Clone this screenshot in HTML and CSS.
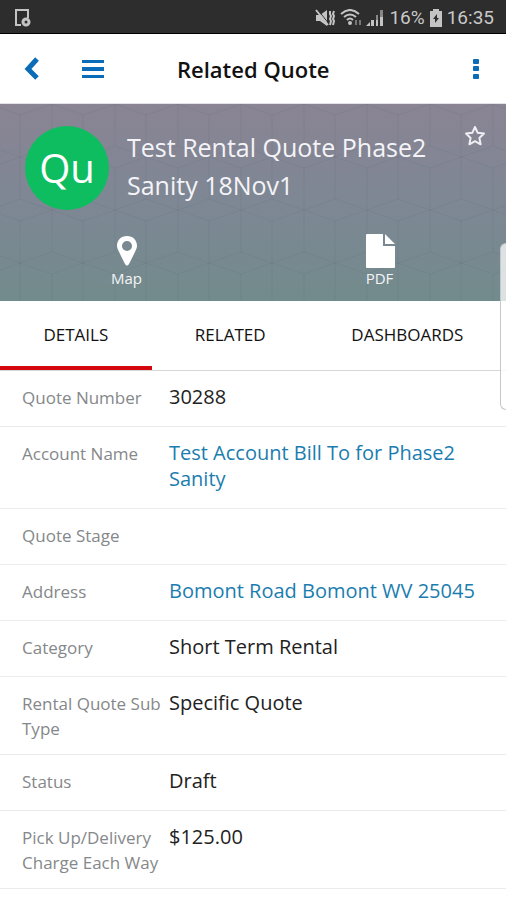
FILE: index.html
```html
<!DOCTYPE html>
<html lang="en">
<head>
<meta charset="utf-8">
<meta name="viewport" content="width=device-width, initial-scale=1">
<title>Related Quote</title>
<link rel="stylesheet" href="styles.css">
</head>
<body>
<div class="status-bar">
  <svg class="status-note" width="18" height="20" viewBox="0 0 18 20" fill="none" stroke="#c4c4c4" stroke-width="2"><path d="M7 17H2V2h12v8"/><circle cx="12" cy="14" r="3" stroke-width="3"/></svg>
  <div class="status-right">
    <svg width="20" height="18" viewBox="0 0 20 18"><path fill="#c4c4c4" d="M1 6h4l7-5v16l-7-5H1z"/><path d="M3 1l11 14" stroke="#2d2d2d" stroke-width="1"/><path d="M1 1l12 15M15 2v3l1 2-1 3 1 2-1 4M19 2l-1 3 1 2-1 3 1 2-1 4" fill="none" stroke="#c4c4c4" stroke-width="2"/></svg>
    <svg width="21" height="18" viewBox="0 0 21 18" fill="none" stroke="#c4c4c4" stroke-width="2"><path d="M1 5q9-8 18 0M4 8q6-5 12 0M7 11q3-3 6 0"/><circle cx="10" cy="14" r="1" fill="#c4c4c4"/><path d="M16 11v5M20 11v5" stroke="#777"/></svg>
    <svg width="18" height="18" viewBox="0 0 18 18" fill="#c4c4c4"><path d="M0 17l4-4v4zM5 11h3v6H5zM10 6h2v11h-2zM14 1h3v16h-3z"/><path fill="#888" d="M10 6h2v5h-2zM14 1h3v7h-3z"/></svg>
    <span class="status-percent">16%</span>
    <svg width="12" height="18" viewBox="0 0 12 18"><path fill="#c4c4c4" d="M3 0h6v2h3v16H0V2h3z"/><path fill="#2d2d2d" d="M7 5L3 10h2v4l4-5H7z"/></svg>
    <span class="status-time">16:35</span>
  </div>
</div>
<header class="nav-bar">
  <button class="icon-button" aria-label="Back"><svg width="16" height="24" viewBox="0 0 16 24" fill="none" stroke="#0b6cb8" stroke-width="5"><path d="M13 2L4 12l9 9"/></svg></button>
  <button class="icon-button menu-button" aria-label="Menu"><svg width="22" height="20" viewBox="0 0 22 20" fill="#0b6cb8"><path d="M0 1h22v3H0zM0 8h22v4H0zM0 16h22v3H0z"/></svg></button>
  <h1 class="page-title">Related Quote</h1>
  <button class="icon-button more-button" aria-label="More"><svg width="6" height="20" viewBox="0 0 6 20" fill="#0b6cb8"><rect width="6" height="5" rx="1"/><rect y="7" width="6" height="5" rx="1"/><rect y="15" width="6" height="5" rx="1"/></svg></button>
</header>
<main>
  <section class="hero">
    <svg class="hero-pattern" aria-hidden="true"><defs><pattern id="cubes" x="20" y="53" width="63" height="106" patternUnits="userSpaceOnUse"><path d="M0 0L32 11L63 0L32-11ZM0 106L32 95L63 106L32 117ZM-32 53L0 42L32 53L0 64ZM32 53L63 42L95 53L63 64ZM0 0V42M63 0V42M32 11V95M0 64V106M63 64V106" fill="none" stroke="#404b68" stroke-opacity=".1"/></pattern></defs><rect width="100%" height="100%" fill="url(#cubes)"/></svg>
    <div class="record">
      <div class="avatar">Qu</div>
      <h2 class="record-name">Test Rental Quote Phase2 Sanity 18Nov1</h2>
      <button class="icon-button star-button" aria-label="Favorite"><svg width="22" height="22" viewBox="0 0 22 22" fill="none" stroke="#eeeef3" stroke-width="2" stroke-linejoin="round"><path d="M11 1l2.700 5.800 6.300.8-4.600 4.300 1.200 6.400L11 15.200l-5.600 3.100 1.200-6.400L2 7.600l6.300-.8z"/></svg></button>
    </div>
    <div class="actions">
      <button class="action"><svg width="36" height="36" viewBox="0 0 36 36"><path fill="#fff" fill-rule="evenodd" d="M18 3C12 3 8 7 8 13c0 3 2 5 3 8l5 10q2 3 4 0l5-10c1-3 3-5 3-8 0-6-4-10-10-10zm0 5a5 5 0 1 1 0 10 5 5 0 0 1 0-10z"/></svg>Map</button>
      <button class="action"><svg width="36" height="36" viewBox="0 0 36 36" fill="#fff"><path d="M5 1h16v12h12v21q0 1-1 1H5q-1 0-1-1V2q0-1 1-1zM23 1l10 10H23z"/></svg>PDF</button>
    </div>
  </section>
  <nav class="tabs">
    <button class="tab tab-active">DETAILS</button>
    <button class="tab">RELATED</button>
    <button class="tab">DASHBOARDS</button>
  </nav>
  <dl class="fields">
    <div class="field"><dt>Quote Number</dt><dd>30288</dd></div>
    <div class="field"><dt>Account Name</dt><dd><a href="#">Test Account Bill To for Phase2 Sanity</a></dd></div>
    <div class="field"><dt>Quote Stage</dt><dd></dd></div>
    <div class="field"><dt>Address</dt><dd><a href="#">Bomont Road Bomont WV 25045</a></dd></div>
    <div class="field"><dt>Category</dt><dd>Short Term Rental</dd></div>
    <div class="field"><dt>Rental Quote Sub Type</dt><dd>Specific Quote</dd></div>
    <div class="field"><dt>Status</dt><dd>Draft</dd></div>
    <div class="field"><dt>Pick Up/Delivery Charge Each Way</dt><dd>$125.00</dd></div>
  </dl>
</main>
<div class="edge-handle"></div>
</body>
</html>
```
FILE: styles.css
```css
* { box-sizing: border-box; }
body {
  margin: 0;
  position: relative;
  background: #fff;
  color: #222;
  font-family: "Open Sans", "Noto Sans", sans-serif;
}
button { font: inherit; color: inherit; background: none; border: 0; padding: 0; }
svg { display: block; }
h1, h2, dl, dd { margin: 0; }

.status-bar {
  display: flex;
  align-items: center;
  justify-content: space-between;
  height: 34px;
  padding: 2px 12px 0 14px;
  background: #2d2d2d;
  border-bottom: 1px solid #000;
  color: #c8c8c8;
  font: 19px "Roboto", sans-serif;
}
.status-right { display: flex; align-items: center; gap: 5px; }

.nav-bar {
  display: flex;
  align-items: center;
  height: 70px;
  padding: 0 27px 0 24px;
  border-bottom: 1px solid #e2e2e8;
}
.menu-button { margin-left: 42px; }
.page-title { flex: 1; padding-left: 73px; font-size: 22px; line-height: 30px; font-weight: 600; color: #111; }

.hero {
  position: relative;
  padding: 22px 20px 13px 25px;
  background: linear-gradient(#8a8494, #7e8794 50%, #728b8c);
  color: #f4f4f8;
}
.hero-pattern { position: absolute; inset: 0; width: 100%; height: 100%; }
.record { position: relative; display: flex; align-items: flex-start; }
.avatar {
  flex: none;
  width: 84px;
  height: 84px;
  border-radius: 50%;
  background: #0dbd60;
  color: #fff;
  font-size: 40px;
  line-height: 84px;
  text-align: center;
}
.record-name { flex: 1; margin: 2px 20px 0 18px; font-size: 25px; line-height: 38px; font-weight: 400; }
.actions { position: relative; display: grid; grid-template-columns: 1fr 1fr; margin: 23px -20px 0 -25px; }
.action { display: flex; flex-direction: column; align-items: center; font-size: 15px; line-height: 19px; }

.tabs { display: grid; grid-template-columns: 30fr 31fr 39fr; border-bottom: 1px solid #d8d8d8; }
.tab { height: 69px; padding-top: 2px; border-bottom: 4px solid transparent; font-size: 17px; font-weight: 500; color: #111; }
.tab-active { border-color: #d4070c; }

.field { display: flex; min-height: 56px; border-bottom: 1px solid #ececec; }
.field dt { flex: none; width: 169px; padding: 14px 8px 13px 22px; font-size: 17px; line-height: 25px; color: #85888a; }
.field dd { flex: 1; padding: 13px 20px 16px 0; font-size: 20px; line-height: 26px; }
.field a { color: #1b7daf; text-decoration: none; }

.edge-handle {
  position: absolute;
  top: 243px;
  right: 0;
  width: 6px;
  height: 167px;
  border: 1px solid #c4c8ca;
  border-right: 0;
  border-radius: 6px 0 0 6px;
  background: rgba(255, 255, 255, .75);
}
```
